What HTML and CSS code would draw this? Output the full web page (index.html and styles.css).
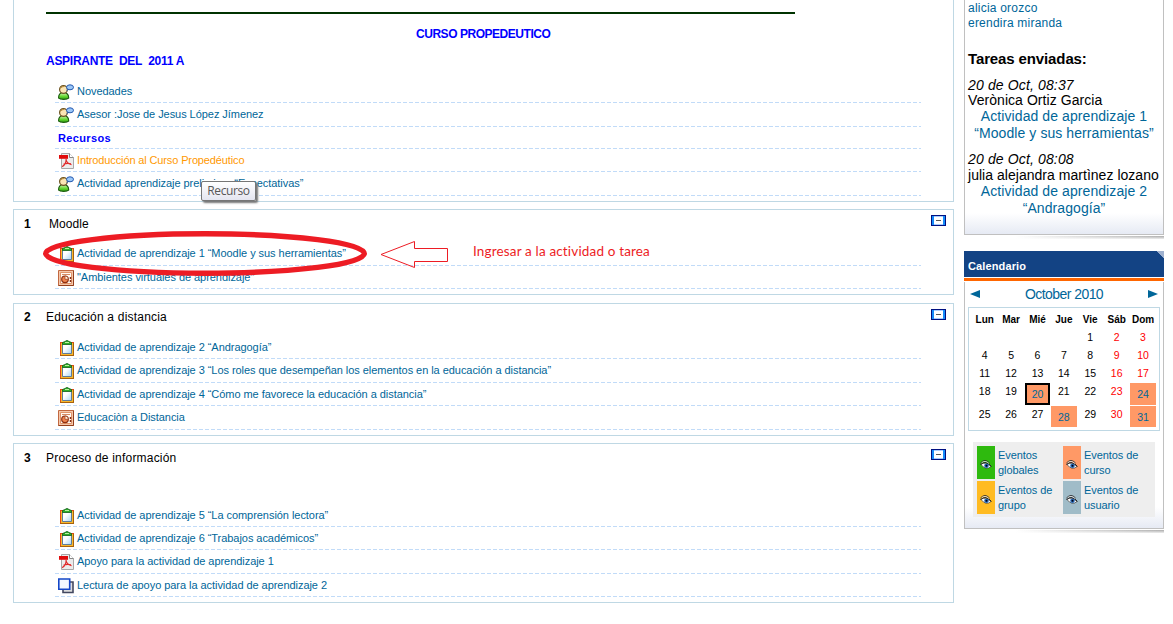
FILE: index.html
```
<!DOCTYPE html>
<html lang="es">
<head>
<meta charset="utf-8">
<title>Curso Propedéutico</title>
<link rel="stylesheet" href="styles.css">
</head>
<body>
<svg class="defs" width="0" height="0" aria-hidden="true">
  <defs>
    <linearGradient id="green" x1="0" y1="0" x2="0" y2="1"><stop offset="0" stop-color="#d8f8b8"/><stop offset=".6" stop-color="#62d62e"/><stop offset="1" stop-color="#2da012"/></linearGradient>
    <linearGradient id="paper" x1="0" y1="0" x2="1" y2="1"><stop offset=".4" stop-color="#fff"/><stop offset="1" stop-color="#a8d4f4"/></linearGradient>
    <symbol id="forum" viewBox="0 0 16 16">
      <path d="M.7 14.200C.3 10.500 2.500 8.500 5.500 8.500s5.500 2 5.100 5.700c-1.600 1.600-8.300 1.600-9.900 0z" fill="url(#green)" stroke="#1c5c10" stroke-width="1.200"/>
      <circle cx="5.500" cy="5.500" r="3.900" fill="#fbe6b4" stroke="#6b5220" stroke-width="1.200"/>
      <path d="M2.500 4.500Q3.500 2.300 6 2.500" fill="none" stroke="#b98a3a"/>
      <path d="M9.500 5.200l-1.600 2 3.300-1.400z" fill="#3c6fc4"/>
      <ellipse cx="12" cy="3.300" rx="3.500" ry="2.500" fill="#9cc8f8" stroke="#2458ae"/>
    </symbol>
    <symbol id="pdf" viewBox="0 0 16 16">
      <path d="M3.500.5h8l4 4v11h-12z" fill="#ececec" stroke="#a8a8a8"/>
      <path d="M11.500.5v4h4" fill="#fff" stroke="#888"/>
      <path d="M1 2h9v3.800H1z" fill="#e00b0b"/>
      <path d="M8 6c.5 3-1.500 6-3.800 7.700M8 6c.2 3.300 2.500 5 5.500 5.600M5.500 11.300c2-.9 4.500-1.200 7.500-.5" fill="none" stroke="#e02a2a" stroke-width="1.200"/>
    </symbol>
    <symbol id="task" viewBox="0 0 16 16">
      <path d="M2 2h14v14H2z" fill="#e0481a"/>
      <path d="M3 3h12.500v12.500H3z" fill="#f9b82c"/>
      <path d="M2 16h14V3h-1v12H2z" fill="#a8620c"/>
      <path d="M4.500 3.500h9v10h-9z" fill="url(#paper)" stroke="#5d7c9c"/>
      <path d="M4.500 4.500V2.500L7 1.500q2-2.200 4 0l2.500 1v2z" fill="#2fae2a" stroke="#0f5c17" stroke-width=".8"/>
      <path d="M7 2.500h4" stroke="#b8f0a0"/>
    </symbol>
    <symbol id="ppt" viewBox="0 0 16 16">
      <path d="M.5.5h15v15H.5z" fill="#f4c8ac" stroke="#c26840"/>
      <path d="M.5 15.500h15V.500" fill="none" stroke="#94401f"/>
      <path d="M2.500 2.500h11v11h-11z" fill="#fff9f3" stroke="#e0946a"/>
      <path d="M4 4.500h8" stroke="#d88a62"/>
      <circle cx="7" cy="9.300" r="3.300" fill="#ee8450" stroke="#8b2f12" stroke-width="1.200"/>
      <path d="M7 9.300V6a3.300 3.300 0 0 1 3.300 3.300z" fill="#fff1dd" stroke="#9b391b" stroke-width=".7"/>
      <path d="M12.500 7v2M12.500 10v2" stroke="#812d17" stroke-width="1.500"/>
    </symbol>
    <symbol id="pages" viewBox="0 0 16 16">
      <path d="M5 4h10v10.500H5z" fill="#ddd" stroke="#434860" stroke-width="1.600"/>
      <path d="M.8 1h10.900v10.200H.8z" fill="#f2f8ff" stroke="#1447c8" stroke-width="1.600"/>
    </symbol>
    <symbol id="fold" viewBox="0 0 15 11">
      <path d="M0 0h15v11H0z" fill="#001080"/>
      <path d="M1 1h2v9H1zM12 1h2v9h-2z" fill="#168cfa"/>
      <path d="M3 1h9v9H3z" fill="#a7cbff"/>
      <path d="M3 2h9v7H3z" fill="#fff"/>
      <path d="M5 5h5v1H5z" fill="#555"/>
    </symbol>
    <symbol id="eye" viewBox="0 0 12 11">
      <path d="M1 5.500Q5 1.800 11 7.500 6 12 1 5.500z" fill="#fff" stroke="#333" stroke-width=".7"/>
      <circle cx="6.500" cy="6.800" r="2.300" fill="#2669b8"/>
      <circle cx="6.500" cy="6.800" r="1" fill="#001"/>
      <path d="M.5 4Q5-.8 9.500 4M.5 5.500Q6 .8 11.500 7.500" fill="none" stroke="#222"/>
      <path d="M1.500 3.800Q5 .6 9 4.500" fill="none" stroke="#eee" stroke-width=".8"/>
    </symbol>
  </defs>
</svg>
<div class="page">
  <main class="course">
    <section class="topic intro">
      <div class="rule"></div>
      <h2 class="course-title">CURSO PROPEDEUTICO</h2>
      <h3 class="group-title">ASPIRANTE&nbsp; DEL&nbsp; 2011 A</h3>
      <ul class="items">
        <li><svg class="icon"><use href="#forum"/></svg><a>Novedades</a></li>
        <li class="tall"><svg class="icon"><use href="#forum"/></svg><a>Asesor :Jose de Jesus López Jímenez</a></li>
        <li class="label">Recursos</li>
        <li><svg class="icon"><use href="#pdf"/></svg><a class="hover">Introducción al Curso Propedéutico</a></li>
        <li class="tall"><svg class="icon"><use href="#forum"/></svg><a>Actividad aprendizaje preliminar “Expectativas”</a></li>
      </ul>
    </section>
    <section class="topic one">
      <header class="head"><b>1</b><span class="name inset">Moodle</span><svg class="fold"><use href="#fold"/></svg></header>
      <ul class="items">
        <li class="tall"><svg class="icon"><use href="#task"/></svg><a>Actividad de aprendizaje 1 “Moodle y sus herramientas”</a></li>
        <li><svg class="icon"><use href="#ppt"/></svg><a>"Ambientes virtuales de aprendizaje"</a></li>
      </ul>
    </section>
    <section class="topic two">
      <header class="head"><b>2</b><span class="name">Educación a distancia</span><svg class="fold"><use href="#fold"/></svg></header>
      <ul class="items">
        <li><svg class="icon"><use href="#task"/></svg><a>Actividad de aprendizaje 2 “Andragogía”</a></li>
        <li class="tall"><svg class="icon"><use href="#task"/></svg><a>Actividad de aprendizaje 3 “Los roles que desempeñan los elementos en la educación a distancia”</a></li>
        <li><svg class="icon"><use href="#task"/></svg><a>Actividad de aprendizaje 4 “Cómo me favorece la educación a distancia”</a></li>
        <li class="tall"><svg class="icon"><use href="#ppt"/></svg><a>Educaciòn a Distancia</a></li>
      </ul>
    </section>
    <section class="topic three">
      <header class="head"><b>3</b><span class="name">Proceso de información</span><svg class="fold"><use href="#fold"/></svg></header>
      <ul class="items">
        <li><svg class="icon"><use href="#task"/></svg><a>Actividad de aprendizaje 5 “La comprensión lectora”</a></li>
        <li><svg class="icon"><use href="#task"/></svg><a>Actividad de aprendizaje 6 “Trabajos académicos”</a></li>
        <li class="tall"><svg class="icon"><use href="#pdf"/></svg><a>Apoyo para la actividad de aprendizaje 1</a></li>
        <li><svg class="icon"><use href="#pages"/></svg><a>Lectura de apoyo para la actividad de aprendizaje 2</a></li>
      </ul>
    </section>
  </main>
  <aside class="side">
    <section class="block recent">
      <a class="person">alicia orozco</a>
      <a class="person">erendira miranda</a>
      <h4 class="sent">Tareas enviadas:</h4>
      <div class="entry"><i>20 de Oct, 08:37</i><span class="who">Verònica Ortiz Garcia</span><a>Actividad de aprendizaje 1</a><a>“Moodle y sus herramientas”</a></div>
      <div class="entry second"><i>20 de Oct, 08:08</i><span class="who">julia alejandra martìnez lozano</span><a>Actividad de aprendizaje 2</a><a>“Andragogía”</a></div>
    </section>
    <div class="shadow"></div>
    <h4 class="bar">Calendario</h4>
    <section class="block calendar">
      <div class="month"><svg width="10" height="8"><path d="M0 4L10 0v8z"/></svg><span>October 2010</span><svg width="10" height="8"><path d="M10 4L0 0v8z"/></svg></div>
      <div class="days">
        <b>Lun</b><b>Mar</b><b>Mié</b><b>Jue</b><b>Vie</b><b>Sáb</b><b>Dom</b>
        <span></span><span></span><span></span><span></span><span>1</span><span class="red">2</span><span class="red">3</span>
        <span>4</span><span>5</span><span>6</span><span>7</span><span>8</span><span class="red">9</span><span class="red">10</span>
        <span>11</span><span>12</span><span>13</span><span>14</span><span>15</span><span class="red">16</span><span class="red">17</span>
        <span>18</span><span>19</span><span class="event today">20</span><span>21</span><span>22</span><span class="red">23</span><span class="event">24</span>
        <span>25</span><span>26</span><span>27</span><span class="event">28</span><span>29</span><span class="red">30</span><span class="event">31</span>
      </div>
      <div class="legend">
        <span class="key global"><svg><use href="#eye"/></svg></span><a>Eventos<br>globales</a>
        <span class="key curso"><svg><use href="#eye"/></svg></span><a>Eventos de<br>curso</a>
        <span class="key grupo"><svg><use href="#eye"/></svg></span><a>Eventos de<br>grupo</a>
        <span class="key usuario"><svg><use href="#eye"/></svg></span><a>Eventos de<br>usuario</a>
      </div>
    </section>
    <div class="shadow"></div>
  </aside>
  <div class="tooltip">Recurso</div>
  <svg class="marks" width="460" height="60">
    <ellipse cx="165" cy="28.500" rx="159.300" ry="19.700" stroke-width="5.400"/>
    <path d="M341 29.500L374.500 16.500v7h33v13h-33v6z"/>
  </svg>
  <div class="note">Ingresar a la actividad o tarea</div>
</div>
</body>
</html>
```
FILE: styles.css
```
* { box-sizing: border-box; margin: 0; padding: 0; }
body { background: #fff; color: #000; font: 11px "Liberation Sans", Arial, sans-serif; overflow: hidden; }
.defs { position: absolute; }
.page { position: relative; display: flex; align-items: flex-start; gap: 10px; width: 1173px; height: 624px; padding-left: 13px; overflow: hidden; }
a { color: #069; }

/* course topics */
.course { display: flex; flex-direction: column; gap: 7px; width: 941px; }
.topic { border: 1px solid #bfd8e4; }
.intro { height: 202px; border-top: 0; padding-top: 12px; }
.one { height: 86px; margin-bottom: 1px; }
.two { height: 133px; }
.three { height: 160px; }
.rule { width: 749px; height: 2px; margin-left: 32px; background: #030; }
.course-title { margin: 13px 0 0 402px; color: #00f; font-size: 12px; line-height: 14px; letter-spacing: -.46px; white-space: nowrap; }
.group-title { margin: 13px 0 0 32px; color: #00f; font-size: 12px; line-height: 14px; letter-spacing: -.28px; }
.items { width: 866px; margin-left: 41px; list-style: none; }
.intro .items { margin-top: 12px; }
.items li { display: flex; height: 23px; padding-left: 3px; gap: 3px; white-space: nowrap; line-height: 22px; letter-spacing: -.05px;
  background: repeating-linear-gradient(90deg, #c1dbf8 0 4px, #fff 4px 6px) bottom / 100% 1px no-repeat; }
.items li.tall { height: 24px; }
.items li.label { height: 22px; font-weight: bold; letter-spacing: .35px; color: #00f; }
.icon { flex: none; width: 16px; height: 16px; margin-top: 4px; }
.head { display: flex; height: 32px; padding: 5px 7px 0 10px; font-size: 12px; line-height: 18px; }
.head b { width: 22px; }
.name { letter-spacing: .2px; }
.name.inset { padding-left: 3px; letter-spacing: .05px; }
.fold { width: 15px; height: 11px; margin-left: auto; }
.two .head { line-height: 16px; }
.three .head { height: 60px; }
.items .hover { color: #f90; letter-spacing: -.13px; }

/* side blocks */
.side { width: 200px; }
.block { border: 1px solid #c0c0c0; border-top: 0; background: linear-gradient(#fff, #e6eaf4) bottom / 100% 21px no-repeat; }
.recent { height: 235px; padding: 1px 3px 0; font-size: 14px; white-space: nowrap; }
.person { display: block; height: 15px; font-size: 12px; line-height: 15px; letter-spacing: .22px; }
.sent { margin-top: 19px; font-size: 15px; line-height: 18px; letter-spacing: -.12px; }
.entry { display: flex; flex-direction: column; margin-top: 9px; line-height: 16px; }
.entry i { height: 15px; letter-spacing: .14px; }
.who { height: 16px; letter-spacing: .06px; }
.entry a { text-align: center; line-height: 16.500px; letter-spacing: .08px; }
.entry.second { margin-top: 10px; }
.second .who { height: 17px; line-height: 18px; letter-spacing: .03px; }
.shadow { height: 3px; margin: 1px 0 0 52px; background: linear-gradient(#0000, #fffc), linear-gradient(90deg, #fff, #aaa); }
.bar { height: 31px; margin-top: 12px; padding: 8px 4px 0; color: #fff; font-size: 11px; line-height: 14px; letter-spacing: .12px; background: linear-gradient(225deg, #9fb1cf 5px, #134384 5px) top / 100% 26px no-repeat, linear-gradient(#f60, #f60) 0 27px / 100% 3px no-repeat; }
.calendar { height: 247px; padding: 4px 3px 0; }
.month { display: flex; align-items: center; justify-content: space-between; height: 15px; padding: 0 2px; color: #069; font-size: 14px; letter-spacing: -.55px; }
.month svg { fill: #069; }
.days { display: grid; grid-template: 17px 17px 17px 17px 22px 21px / repeat(7, 25.400px); gap: 1px; height: 124px; margin-top: 6px; padding: 3px 3px 0; border: 1px solid #bfd8e4; width: 192px; text-align: center; font-size: 10.500px; line-height: 17px; }
.days b { font-size: 10px; line-height: 18px; }
.days .red { color: #f00; }
.days .event { background: #f96; color: #069; line-height: 22px; }
.days .today { border: 2px solid #000; line-height: 18px; }
.legend { display: grid; grid-template: 33px 33px / 18px 62px 18px 62px; column-gap: 3px; row-gap: 2px; height: 75px; width: 182px; margin: 11px 0 0 5px; padding: 4px; background: #eee; line-height: 15px; letter-spacing: -.08px; white-space: nowrap; }
.legend a { padding-top: 2px; }
.key { display: flex; align-items: center; justify-content: center; }
.key svg { width: 12px; height: 11px; margin-top: 3px; }
.global { background: #2eba0e; }
.curso { background: #f96; }
.grupo { background: #fb2; }
.usuario { background: #a0bcc8; }

/* annotations over the page */
.tooltip { position: absolute; left: 201px; top: 181px; width: 55px; height: 20px; border: 1px solid #767676; border-radius: 2px; background: linear-gradient(#fff, #e4e5f0); box-shadow: 2px 2px 2px #777; color: #575757; font: 12px/18px "Open Sans", sans-serif; letter-spacing: -.4px; text-align: center; }
.marks { position: absolute; left: 40px; top: 225px; fill: none; stroke: #ed1c24; }
.note { position: absolute; left: 473px; top: 243px; color: #ed1c24; font: 13.500px/17px Lato, sans-serif; letter-spacing: .16px; font-variant-ligatures: none; white-space: nowrap; }
```
